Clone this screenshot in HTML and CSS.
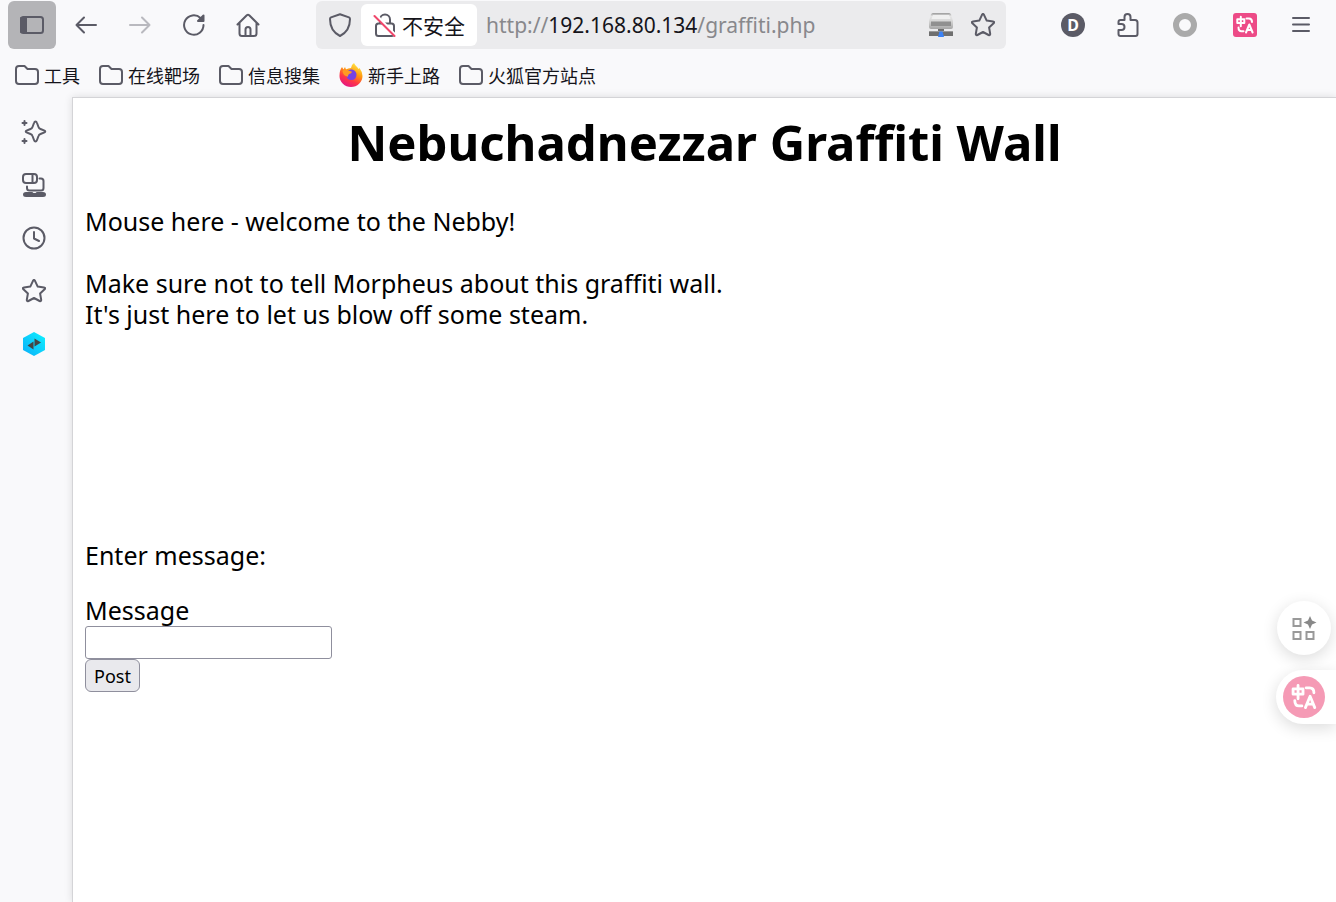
FILE: index.html
```html
<!DOCTYPE html>
<html lang="zh-CN">
<head>
    <meta charset="utf-8">
    <title>Nebuchadnezzar Graffiti Wall</title>
    <link rel="stylesheet" href="styles.css">
</head>
<body>
    <svg class="defs" aria-hidden="true">
        <symbol id="folder" viewBox="0 0 24 22">
            <path d="M4 2h5.500l3 3H20a3 3 0 0 1 3 3v9a3 3 0 0 1-3 3H4a3 3 0 0 1-3-3V5a3 3 0 0 1 3-3z"/>
        </symbol>
        <symbol id="star" viewBox="0 0 24 24">
            <path d="M11 1.800q1-1.800 2 0l2.700 5.800 6.300.8q1.900.4.6 1.800l-4.500 4.300 1.100 6.300q.1 1.900-1.600 1.200L12 19l-5.600 3q-1.700.7-1.600-1.200l1.100-6.300L1.400 10.200Q.1 8.800 2 8.400l6.300-.8z"/>
        </symbol>
        <symbol id="translate" viewBox="0 0 24 24">
            <path d="M4.300 6.300h7v3.700h-7zM7.800 3.800v9.500M13.500 5.500h2.500q3 0 3 3.500M5.500 14.500q0 3.800 3 3.800h2M13 19.500l3.300-8L19.600 19.500M14.200 17h4.200"/>
        </symbol>
    </svg>

    <header>
        <div class="toolbar">
            <button class="tool active" aria-label="Sidebar">
                <svg width="24" height="24" viewBox="0 0 24 24"><rect x="1" y="4" width="22" height="16" rx="2.500"/><path class="fill" d="M1 5h5v14H1z"/></svg>
            </button>
            <button class="tool" aria-label="Back">
                <svg width="24" height="24" viewBox="0 0 24 24"><path d="M22 12H2.500M10 4.500L2.500 12l7.500 7.500"/></svg>
            </button>
            <button class="tool" aria-label="Forward" disabled>
                <svg width="24" height="24" viewBox="0 0 24 24"><path d="M2 12h19.500M14 4.500l7.500 7.500-7.500 7.500"/></svg>
            </button>
            <button class="tool" aria-label="Reload">
                <svg width="24" height="24" viewBox="0 0 24 24"><path d="M21.500 12A9.700 9.700 0 1 1 18.500 5"/><path class="fill" d="M21.500 2.500V8h-5.500z"/></svg>
            </button>
            <button class="tool" aria-label="Home">
                <svg width="24" height="24" viewBox="0 0 24 24"><path d="M1.500 11.500L10.800 2.200q1.200-1 2.400 0l9.300 9.300M3.500 10v10.500q0 2.500 2.500 2.500h12q2.500 0 2.500-2.500V10M9.500 23v-6.500q0-2.500 2.500-2.500t2.500 2.500V23"/></svg>
            </button>

            <div class="urlbar">
                <button class="shield" aria-label="Tracking protection">
                    <svg width="24" height="24" viewBox="0 0 24 24"><path d="M12 1.200l9 3.200q1 .5 1 1.600c0 8-3 13.500-10 17C5 19.500 2 14 2 6q0-1.100 1-1.600z"/></svg>
                </button>
                <button class="insecure">
                    <svg width="24" height="24" viewBox="0 0 24 24"><path d="M7 10V6.500a5 5 0 0 1 10 0V10M5.500 10.500h13q2.500 0 2.500 2.500v7.500q0 2.500-2.500 2.500h-13Q3 23 3 20.500V13q0-2.500 2.500-2.500z"/><path class="slash-bg" d="M3 2l20 21"/><path class="slash" d="M1.500 3L21.500 23"/></svg>
                    不安全
                </button>
                <a class="url" href="#">http://<span>192.168.80.134</span>/graffiti.php</a>
                <button class="url-icon" aria-label="Proxy">
                    <svg class="drive" width="24" height="24" viewBox="0 0 24 24">
                        <defs>
                            <linearGradient id="metal" x1="0" y1="0" x2="0" y2="1">
                                <stop offset="0" stop-color="#999"/>
                                <stop offset="0.200" stop-color="#e6e6e6"/>
                                <stop offset="0.500" stop-color="#d6d6d6"/>
                                <stop offset="1" stop-color="#a6a6a6"/>
                            </linearGradient>
                        </defs>
                        <path fill="url(#metal)" d="M4 0h16q1.500 0 2 1.500L24 8v6q0 2-2 2H2q-2 0-2-2V8l2-6.500Q2.500 0 4 0z"/>
                        <path fill="#f0f0f0" d="M4 2h16l1.500 4h-19z"/>
                        <path fill="#909090" d="M2 8.500h20v4.500H2z"/>
                        <path fill="#6f6f6f" d="M9 16h6v2h9v5H0v-5h9z"/>
                        <path fill="#999" d="M0 18h24v1H0z"/>
                        <path fill="#3b82f6" d="M10.500 18.500h3L15 24H9z"/>
                    </svg>
                </button>
                <button class="url-icon" aria-label="Bookmark this page">
                    <svg width="24" height="24"><use href="#star"/></svg>
                </button>
            </div>

            <button class="tool" aria-label="Account"><span class="avatar">D</span></button>
            <button class="tool" aria-label="Extensions">
                <svg width="24" height="24" viewBox="0 0 24 24"><path d="M3.500 7h4V4a3 3 0 0 1 6 0v3H18q2.500 0 2.500 2.500V21q0 2-2 2h-15q-2 0-2-2v-4h3a3 3 0 0 0 0-6h-3V9q0-2 2-2z"/></svg>
            </button>
            <button class="tool" aria-label="Proxy switch"><span class="ring"></span></button>
            <button class="tool spaced" aria-label="Translate">
                <span class="translate"><svg width="24" height="24"><use href="#translate"/></svg></span>
            </button>
            <button class="tool" aria-label="Menu">
                <svg width="24" height="24" viewBox="0 0 24 24"><path d="M4 5h16M4 11.500h16M4 18h16"/></svg>
            </button>
        </div>

        <nav class="bookmarks">
            <a href="#"><svg width="24" height="22"><use href="#folder"/></svg>工具</a>
            <a href="#"><svg width="24" height="22"><use href="#folder"/></svg>在线靶场</a>
            <a href="#"><svg width="24" height="22"><use href="#folder"/></svg>信息搜集</a>
            <a href="#">
                <svg class="firefox" width="24" height="24" viewBox="0 0 24 24">
                    <defs>
                        <linearGradient id="fire" x1="0.800" y1="0" x2="0.300" y2="1">
                            <stop offset="0" stop-color="#fff44f"/>
                            <stop offset="0.400" stop-color="#ff980e"/>
                            <stop offset="0.700" stop-color="#ff3647"/>
                            <stop offset="1" stop-color="#e31587"/>
                        </linearGradient>
                    </defs>
                    <path fill="url(#fire)" d="M15 0q1 2.500 3.500 4.500l1 1.500 1-1q3 4 3 8a11.500 11 0 0 1-23 0Q.5 7 3 4l1.500 2.500L6 4l1 2.500Q9 5 12 5q0-3 3-5z"/>
                    <path fill="#7542e5" d="M8 8.500q2-2.500 5-2 4.500 1 4.500 5.500-.5 5-5 5T7.500 13z"/>
                    <path fill="#ff9a22" d="M3.500 8q2.500-2.500 6-.5l3.500 1.200q-.5 1.800-2.500 2-2 .8-1.500 3-5-.7-5.500-5.700z"/>
                </svg>新手上路</a>
            <a href="#"><svg width="24" height="22"><use href="#folder"/></svg>火狐官方站点</a>
        </nav>
    </header>

    <div class="window">
        <aside>
            <button aria-label="AI chat">
                <svg width="26" height="26" viewBox="0 0 26 26"><path d="M14.500 2.500Q15.500 2.500 16 4l1.500 4q.5 1.500 2 2l4 1.700q1.500.8 0 1.600l-4 1.700q-1.500.5-2 2L16 21q-.5 1.500-1.500 1.500T13 21l-1.500-4q-.5-1.500-2-2l-4-1.700q-1.500-.8 0-1.600l4-1.700q1.500-.5 2-2L13 4q.5-1.500 1.500-1.500z"/><path d="M3.500 2v4M1.500 4h4M3.500 20v4M1.500 22h4"/></svg>
            </button>
            <button aria-label="Synced tabs">
                <svg width="26" height="26" viewBox="0 0 26 26"><rect x="2" y="2" width="14" height="9" rx="3"/><path d="M11.500 2v9M18.500 6.500H20q2.500 0 2.500 2.500v7q0 2.500-2.500 2.500H8.500Q6 18.500 6 16v-1.500"/><path class="fill" d="M5 21h6l1 1h3l1-1h6q2 0 2 1.500T22 24H5q-2 0-2-1.500T5 21z"/></svg>
            </button>
            <button aria-label="History">
                <svg width="24" height="24" viewBox="0 0 24 24"><circle cx="12" cy="12" r="10.500"/><path d="M12 6v6.500l5 2.500"/></svg>
            </button>
            <button aria-label="Bookmarks">
                <svg width="24" height="24"><use href="#star"/></svg>
            </button>
            <button aria-label="Proxy panel">
                <svg class="hexagon" width="24" height="24" viewBox="0 0 24 24">
                    <defs>
                        <linearGradient id="cyan" x1="0" y1="1" x2="1" y2="0">
                            <stop offset="0" stop-color="#0aaef8"/>
                            <stop offset="1" stop-color="#10f2ff"/>
                        </linearGradient>
                    </defs>
                    <path fill="url(#cyan)" d="M12 0l11 6v12l-11 6L1 18V6z"/>
                    <path fill="#444" d="M5.500 13.500l6-4v8zM12.500 6.500l6.500 4-6.500 4z"/>
                </svg>
            </button>
        </aside>

        <main>
            <h1>Nebuchadnezzar Graffiti Wall</h1>
            <div class="wall">
                <p>Mouse here - welcome to the Nebby!</p>
                <p>Make sure not to tell Morpheus about this graffiti wall.<br>It's just here to let us blow off some steam.</p>
            </div>
            <form>
                <p>Enter message:</p>
                <label for="message">Message</label>
                <input type="text" id="message" name="message">
                <button type="submit">Post</button>
            </form>
        </main>
    </div>

    <div class="floating">
        <button class="round" aria-label="Tools">
            <svg width="26" height="26" viewBox="0 0 26 26"><path d="M2.500 4h7v7h-7zM2.500 17h7v7h-7zM15.500 17h7v7h-7z"/><path class="fill" d="M19 1l2 4.500 4.500 2-4.500 2L19 14l-2-4.500-4.500-2 4.500-2z"/></svg>
        </button>
        <button class="tab" aria-label="Translate page">
            <span><svg width="34" height="34"><use href="#translate"/></svg></span>
        </button>
    </div>
</body>
</html>
```
FILE: styles.css
```css
* {
    box-sizing: border-box;
}

body {
    margin: 0;
    min-height: 100vh;
    display: flex;
    flex-direction: column;
    background-color: #f9f9fb;
    color: #15141a;
    font-family: "Noto Sans", "Noto Sans CJK SC", sans-serif;
}

button {
    padding: 0;
    border: none;
    background: none;
    color: inherit;
    font-family: inherit;
}

a {
    color: inherit;
    text-decoration: none;
}

svg {
    flex: none;
    fill: none;
    stroke: #5b5b66;
    stroke-width: 2;
    stroke-linecap: round;
    stroke-linejoin: round;
}

.defs {
    position: absolute;
    width: 0;
    height: 0;
}

.fill {
    fill: #5b5b66;
}

.toolbar {
    display: flex;
    align-items: center;
    gap: 6px;
    padding: 1px 11px 1px 8px;
}

.tool {
    display: flex;
    align-items: center;
    justify-content: center;
    width: 48px;
    height: 48px;
    border-radius: 6px;
}

.tool.active {
    background-color: #b4b4b7;
}

.tool:disabled {
    opacity: 0.4;
}

.urlbar {
    flex: 1;
    display: flex;
    align-items: center;
    height: 48px;
    margin: 0 35px 0 38px;
    padding: 0 11px 0 12px;
    border-radius: 6px;
    background-color: #ebebed;
}

.urlbar ~ .tool {
    margin-left: 2px;
}

.urlbar ~ .spaced {
    margin-left: 6px;
}

.urlbar button {
    display: flex;
    align-items: center;
}

.insecure {
    gap: 5px;
    height: 42px;
    margin: 0 9px;
    padding: 0 12px;
    border-radius: 6px;
    background-color: #fff;
    font-size: 21px;
}

.slash-bg {
    stroke: #fff;
    stroke-width: 3;
}

.slash {
    stroke: #f0476b;
}

.url {
    flex: 1;
    color: #88888c;
    font-size: 21px;
}

.url span {
    color: #15141a;
}

.url-icon {
    margin-left: 18px;
}

.drive,
.firefox,
.hexagon {
    stroke: none;
}

.avatar {
    width: 24px;
    border-radius: 50%;
    background-color: #5b5b66;
    color: #fff;
    font-size: 16px;
    font-weight: bold;
    line-height: 24px;
}

.ring {
    width: 24px;
    height: 24px;
    border: 6px solid #aaa;
    border-radius: 50%;
}

.translate {
    display: flex;
    border-radius: 3px;
    background-color: #ed4b87;
}

.translate svg,
.tab svg {
    stroke: #fff;
}

.bookmarks {
    display: flex;
    align-items: center;
    gap: 19px;
    height: 47px;
    padding: 2px 15px 0;
    font-size: 18px;
}

.bookmarks a {
    display: flex;
    align-items: center;
    gap: 5px;
}

.window {
    flex: 1;
    display: flex;
}

aside {
    display: flex;
    flex-direction: column;
    align-items: center;
    gap: 5px;
    width: 72px;
    padding: 11px 4px 0 0;
}

aside button {
    display: flex;
    align-items: center;
    justify-content: center;
    width: 48px;
    height: 48px;
}

main {
    flex: 1;
    padding: 12px;
    border-top: 1px solid #d4d4d7;
    border-left: 1px solid #d4d4d7;
    background-color: #fff;
    box-shadow: 0 0 8px rgba(0, 0, 0, 0.12);
    color: #000;
    font-size: 25px;
    line-height: 31px;
}

h1 {
    margin: 0 0 32px;
    font-size: 49px;
    line-height: 64px;
    text-align: center;
}

p {
    margin: 0;
}

.wall {
    display: flex;
    flex-direction: column;
    gap: 31px;
    min-height: 334px;
}

form {
    display: flex;
    flex-direction: column;
    align-items: flex-start;
}

form p {
    margin-bottom: 24px;
}

form input {
    width: 247px;
    height: 33px;
    padding: 2px 4px;
    border: 1px solid #8f8f9d;
    border-radius: 3px;
    font-family: inherit;
    font-size: 18px;
}

form button {
    height: 33px;
    padding: 0 8px;
    border: 1px solid #8f8f9d;
    border-radius: 6px;
    background-color: #e9e9ed;
    font-size: 18px;
}

.floating {
    position: fixed;
    right: 0;
    bottom: 178px;
    display: flex;
    flex-direction: column;
    align-items: flex-end;
    gap: 15px;
}

.floating button {
    display: flex;
    align-items: center;
    height: 54px;
    background-color: #fff;
    box-shadow: 0 4px 16px rgba(0, 0, 0, 0.14);
}

.floating .round {
    justify-content: center;
    width: 54px;
    margin-right: 5px;
    border-radius: 50%;
}

.round svg {
    stroke: #999;
    stroke-linejoin: miter;
}

.round .fill {
    fill: #888;
    stroke: none;
}

.tab {
    padding: 0 11px 0 7px;
    border-radius: 27px 0 0 27px;
}

.tab span {
    display: flex;
    padding: 4px;
    border-radius: 50%;
    background-color: #f59ab5;
}
```
